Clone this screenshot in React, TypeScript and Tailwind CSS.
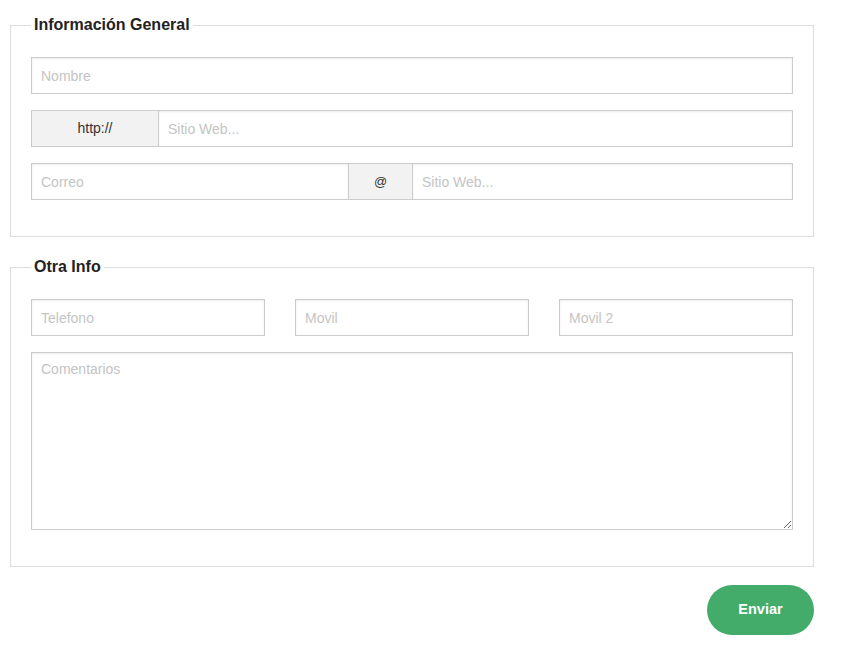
import React from "react";

const inputCls =
  "block h-[37px] w-full border border-[#cccccc] bg-white px-[9px] text-[14px] text-[#333] placeholder:text-[#c4c4c4] outline-none shadow-[inset_0_1px_2px_rgba(0,0,0,0.08)]";

export default function App() {
  return (
    <div
      className="min-h-[659px] w-[842px] bg-white px-[10px] pt-[14px]"
      style={{ fontFamily: '"Liberation Sans", Arial, Helvetica, sans-serif' }}
    >
      <form className="w-[804px]" onSubmit={(e) => e.preventDefault()}>
        <fieldset className="m-0 border border-[#dddddd] px-[20px] pb-[20px] pt-[21px]">
          <legend className="ml-0 px-[3px] text-[16px] font-bold leading-[22px] text-[#222]">
            Información General
          </legend>
          <input className={inputCls + " mb-[16px]"} placeholder="Nombre" />
          <div className="mb-[16px] flex h-[37px]">
            <span className="flex w-[127px] shrink-0 items-center justify-center border border-r-0 border-[#cccccc] bg-[#f2f2f2] text-[14px] text-[#333]">
              http://
            </span>
            <input className={inputCls} placeholder="Sitio Web..." />
          </div>
          <div className="mb-[16px] flex h-[37px]">
            <input className={inputCls + " !w-[317px] shrink-0 border-r-0"} placeholder="Correo" />
            <span className="flex w-[64px] shrink-0 items-center justify-center border border-r-0 border-[#cccccc] bg-[#f2f2f2] text-[13px] text-[#333]">
              @
            </span>
            <input className={inputCls} placeholder="Sitio Web..." />
          </div>
        </fieldset>

        <fieldset className="m-0 mt-[19px] border border-[#dddddd] px-[20px] pb-[20px] pt-[21px]">
          <legend className="ml-0 px-[3px] text-[16px] font-bold leading-[22px] text-[#222]">
            Otra Info
          </legend>
          <div className="mb-[16px] flex gap-[30px]">
            <input className={inputCls + " flex-1"} placeholder="Telefono" />
            <input className={inputCls + " flex-1"} placeholder="Movil" />
            <input className={inputCls + " flex-1"} placeholder="Movil 2" />
          </div>
          <textarea
            className="mb-[16px] block h-[178px] w-full border border-[#cccccc] bg-white px-[9px] pt-[6px] text-[14px] text-[#333] placeholder:text-[#c4c4c4] outline-none shadow-[inset_0_1px_2px_rgba(0,0,0,0.08)]"
            placeholder="Comentarios"
          />
        </fieldset>

        <div className="mt-[18px] flex justify-end">
          <button
            type="submit"
            className="h-[50px] w-[107px] rounded-full bg-[#43ac6a] text-[14.5px] font-bold text-white"
          >
            Enviar
          </button>
        </div>
      </form>
    </div>
  );
}
